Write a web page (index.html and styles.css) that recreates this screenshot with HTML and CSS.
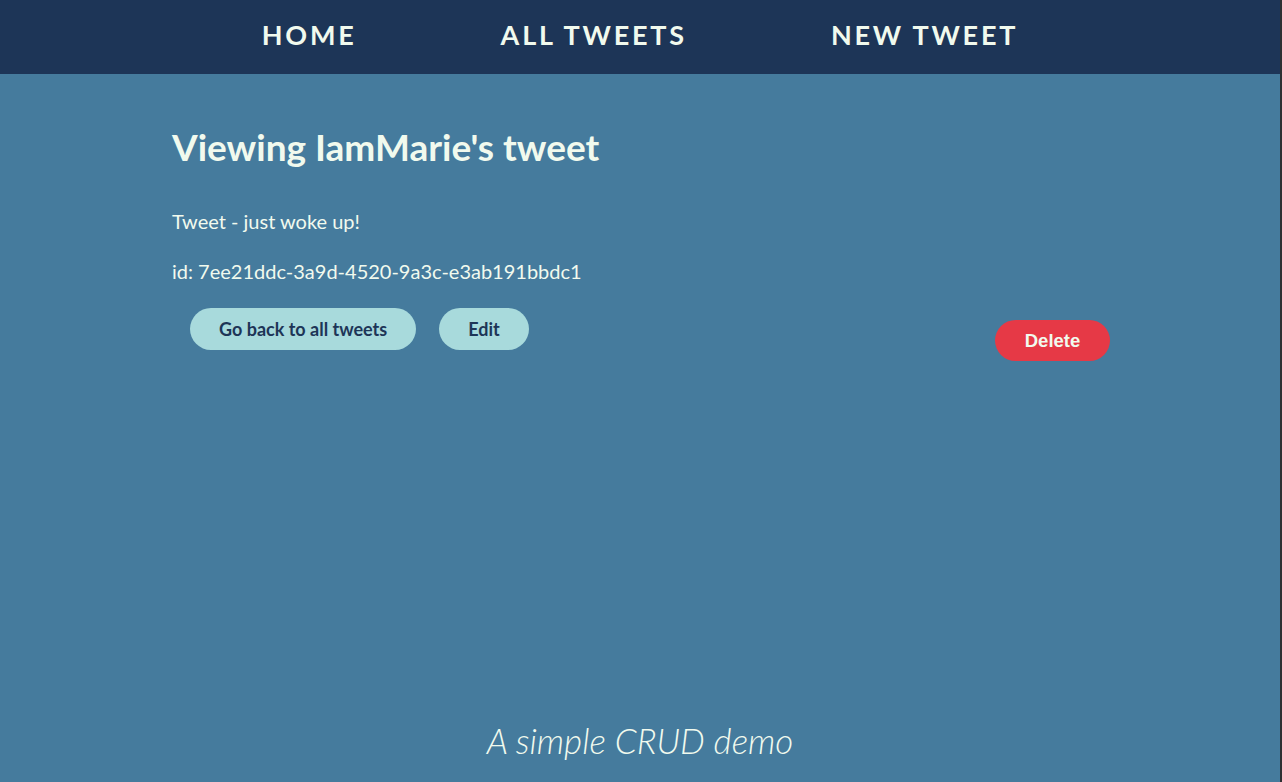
FILE: index.html
```html
<!DOCTYPE html>
<html lang="en">
<head>
<meta charset="utf-8">
<title>Viewing tweet</title>
<link rel="stylesheet" href="styles.css">
</head>
<body>
<div class="page">
  <nav class="nav">
    <a class="nav-link" href="#">HOME</a>
    <a class="nav-link" href="#">ALL TWEETS</a>
    <a class="nav-link" href="#">NEW TWEET</a>
  </nav>
  <main class="content">
    <h1 class="title">Viewing IamMarie's tweet</h1>
    <p class="text">Tweet - just woke up!</p>
    <p class="text">id: 7ee21ddc-3a9d-4520-9a3c-e3ab191bbdc1</p>
    <div class="actions">
      <button class="btn btn-light btn-back">Go back to all tweets</button>
      <button class="btn btn-light">Edit</button>
      <button class="btn btn-delete">Delete</button>
    </div>
  </main>
  <footer class="footer">A simple CRUD demo</footer>
</div>
</body>
</html>
```

FILE: styles.css
```css
html, body {
  margin: 0;
  padding: 0;
  height: 100%;
}
body {
  background: #2e3033;
  font-family: Lato, "Noto Sans", sans-serif;
  color: #f1faee;
}
.page {
  width: 1280px;
  height: 782px;
  background: #457b9d;
  display: flex;
  flex-direction: column;
}
.nav {
  height: 74px;
  box-sizing: border-box;
  padding-bottom: 5px;
  background: #1d3557;
  display: flex;
  justify-content: center;
  align-items: center;
  gap: 144px;
}
.nav-link {
  color: #f1faee;
  text-decoration: none;
  font-weight: 700;
  font-size: 27px;
  letter-spacing: 2.8px;
}
.content {
  width: 940px;
  margin: 0 auto;
  flex: 1;
  padding-left: 2px;
  box-sizing: border-box;
}
.title {
  margin: 50px 0 0;
  font-size: 37px;
  font-weight: 700;
  line-height: 46px;
}
.text {
  font-size: 20px;
  margin: 38px 0 0;
  line-height: 26px;
}
.text + .text {
  margin-top: 24px;
}
.actions {
  display: flex;
  align-items: flex-start;
  margin-top: 24px;
  padding-left: 18px;
}
.btn {
  border: none;
  border-radius: 22px;
  cursor: pointer;
  font-weight: 700;
}
.btn-light {
  background: #a8dadc;
  color: #1d3557;
  font-family: Lato, "Noto Sans", sans-serif;
  font-size: 18px;
  height: 42px;
  padding: 0 29px;
  margin-right: 23px;
}
.btn-delete {
  margin-left: auto;
  margin-top: 12px;
  background: #e63946;
  color: #f1faee;
  font-family: "Liberation Sans", Arial, sans-serif;
  font-size: 18.5px;
  height: 41px;
  width: 115px;
  margin-right: 0;
}
.footer {
  text-align: center;
  font-style: italic;
  font-weight: 300;
  font-size: 35px;
  padding-bottom: 21px;
}
```
